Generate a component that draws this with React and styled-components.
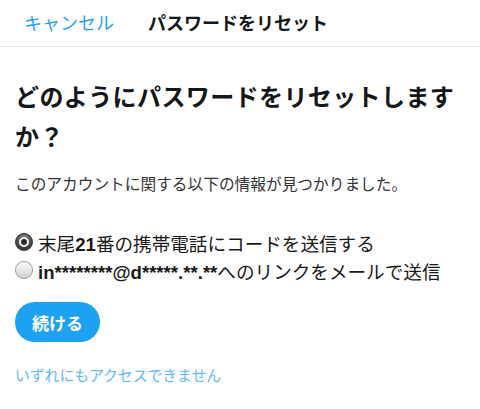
import styled, { createGlobalStyle } from "styled-components";

const Global = createGlobalStyle`
  body {
    margin: 0;
    background: #fff;
    font-family: "Liberation Sans", "Noto Sans CJK JP", sans-serif;
    color: #14171a;
  }
`;

const Header = styled.header`
  height: 47px;
  border-bottom: 1px solid #e6e6e6;
  display: flex;
  align-items: center;
  padding: 0 0 2px 24px;
  box-sizing: border-box;
  gap: 34px;
`;
const Cancel = styled.a`
  color: #2aa3ef;
  font-size: 18px;
  font-family: "Noto Sans CJK JP", sans-serif;
`;
const Title = styled.h1`
  margin: 0;
  font-size: 18px;
  font-weight: 700;
  font-family: "Noto Sans CJK JP", sans-serif;
`;
const Main = styled.main`
  padding: 0 15px;
  display: flex;
  flex-direction: column;
  align-items: flex-start;
`;
const Heading = styled.h2`
  margin: 29px 0 0;
  font-size: 24px;
  line-height: 40px;
  font-weight: 700;
  font-family: "Noto Sans CJK JP", sans-serif;
  letter-spacing: 0.4px;
`;
const Info = styled.p`
  margin: 16px 0 0;
  font-size: 15.7px;
  line-height: 24px;
  color: #333;
  font-family: "Noto Sans CJK JP", sans-serif;
`;
const Options = styled.div`
  margin-top: 32px;
  display: flex;
  flex-direction: column;
`;
const Option = styled.label`
  height: 28px;
  display: flex;
  align-items: center;
  gap: 5px;
  font-size: 18.6px;
  color: #1a1a1a;
`;
const Radio = styled.span`
  width: 18px;
  height: 18px;
  border-radius: 50%;
  box-sizing: border-box;
  flex: none;
  position: relative;
  border: 1px solid ${(p) => (p.$on ? "#333" : "#9a9a9a")};
  background: ${(p) =>
    p.$on
      ? "radial-gradient(circle at 50% 30%, #8a8a8a, #3c3c3c 70%)"
      : "linear-gradient(#fdfdfd, #d2d2d2)"};
  &::after {
    content: "";
    display: ${(p) => (p.$on ? "block" : "none")};
    position: absolute;
    left: 3px;
    top: 3px;
    width: 10px;
    height: 10px;
    border-radius: 50%;
    box-sizing: border-box;
    border: 2px solid #f4f4f4;
    background: #2a2a2a;
  }
`;
const Bold = styled.b`
  font-weight: 700;
`;
const Button = styled.button`
  margin-top: 18px;
  height: 40px;
  padding: 0 17px;
  border: none;
  border-radius: 20px;
  background: #1da1f2;
  color: #fff;
  font-size: 17px;
  font-weight: 700;
  font-family: "Noto Sans CJK JP", sans-serif;
`;
const Help = styled.a`
  margin-top: 23px;
  font-size: 14.8px;
  line-height: 20px;
  color: #62b6f2;
  font-family: "Noto Sans CJK JP", sans-serif;
`;

export default function App() {
  return (
    <>
      <Global />
      <Header>
        <Cancel>キャンセル</Cancel>
        <Title>パスワードをリセット</Title>
      </Header>
      <Main>
        <Heading>どのようにパスワードをリセットしますか？</Heading>
        <Info>このアカウントに関する以下の情報が見つかりました。</Info>
        <Options>
          <Option>
            <Radio $on />
            <span>
              末尾<Bold>21</Bold>番の携帯電話にコードを送信する
            </span>
          </Option>
          <Option>
            <Radio />
            <span>
              <Bold>in********@d*****.**.**</Bold>へのリンクをメールで送信
            </span>
          </Option>
        </Options>
        <Button>続ける</Button>
        <Help>いずれにもアクセスできません</Help>
      </Main>
    </>
  );
}
